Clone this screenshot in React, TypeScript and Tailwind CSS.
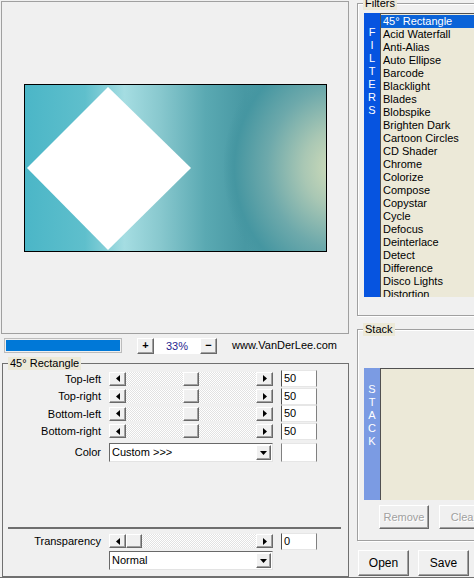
import React from "react";

const filters = [
  "45° Rectangle",
  "Acid Waterfall",
  "Anti-Alias",
  "Auto Ellipse",
  "Barcode",
  "Blacklight",
  "Blades",
  "Blobspike",
  "Brighten Dark",
  "Cartoon Circles",
  "CD Shader",
  "Chrome",
  "Colorize",
  "Compose",
  "Copystar",
  "Cycle",
  "Defocus",
  "Deinterlace",
  "Detect",
  "Difference",
  "Disco Lights",
  "Distortion",
];

const sliders = [
  { label: "Top-left", value: 50 },
  { label: "Top-right", value: 50 },
  { label: "Bottom-left", value: 50 },
  { label: "Bottom-right", value: 50 },
];

const raised =
  "flex items-center justify-center bg-[#f0f0f0] border border-t-white border-l-white border-r-[#696969] border-b-[#696969] shadow-[inset_-1px_-1px_0_#a0a0a0]";

const ArrowBtn = ({ dir }: { dir: "left" | "right" }) => (
  <div className={`${raised} w-[17px] h-[14px] shrink-0`}>
    <svg width="4" height="7" viewBox="0 0 4 7">
      {dir === "left" ? (
        <polygon points="4,0 4,7 0,3.5" fill="#000" />
      ) : (
        <polygon points="0,0 0,7 4,3.5" fill="#000" />
      )}
    </svg>
  </div>
);

const Slider = ({ atStart }: { atStart?: boolean }) => (
  <div className="flex w-[164px] h-[14px] bg-[repeating-conic-gradient(#ffffff_0_25%,#e2e2e2_0_50%)] bg-[length:2px_2px]">
    <ArrowBtn dir="left" />
    <div className={`flex-1 flex ${atStart ? "justify-start" : "justify-center"}`}>
      <div className={`${raised} w-[16px] h-[14px]`} />
    </div>
    <ArrowBtn dir="right" />
  </div>
);

const TextBox = ({ value }: { value: string }) => (
  <div className="w-[36px] h-[17px] bg-white border border-[#e6e6e6] border-l-[#505050] border-r-[#808080] pl-[2px] leading-[15px]">
    {value}
  </div>
);

const Select = ({ value }: { value: string }) => (
  <div className="flex items-center w-[164px] h-[19px] bg-white border border-t-[#696969] border-l-[#696969] border-r-[#e3e3e3] border-b-[#e3e3e3] pl-[2px]">
    <span className="flex-1 leading-[17px]">{value}</span>
    <div className={`${raised} w-[15px] h-[15px] mr-px`}>
      <svg width="7" height="4" viewBox="0 0 7 4">
        <polygon points="0,0 7,0 3.5,4" fill="#000" />
      </svg>
    </div>
  </div>
);

const Strip = ({ text, color, padTop }: { text: string; color: string; padTop: string }) => (
  <div className={`w-[16px] shrink-0 flex flex-col items-center ${color} ${padTop} text-white`}>
    {text.split("").map((c, i) => (
      <span key={i} className="h-[13px] leading-[13px]">
        {c}
      </span>
    ))}
  </div>
);

export default function App() {
  return (
    <div className="w-[474px] h-[578px] bg-[#f0f0f0] flex overflow-hidden border-b border-[#707070] font-['Liberation_Sans',Arial,sans-serif] text-[11px] text-black">
      {/* left column */}
      <div className="w-[350px] shrink-0 flex flex-col">
        {/* preview */}
        <div className="mt-px ml-px w-[348px] h-[333px] border border-[#a0a0a0] flex items-center justify-center">
          <div className="w-[303px] h-[168px] border border-black bg-[image:radial-gradient(ellipse_115px_130px_at_104%_50%,#d3deba_0%,#a9c7b4_30%,#6da9ab_62%,#4596a1_90%,rgba(69,150,161,0)_100%),linear-gradient(90deg,#4bb6c7_0%,#5fbfcc_20%,#a5dde2_33%,#88c8ce_45%,#5aa9b2_60%,#4898a3_73%,#4f9ea6_100%)]">
            <svg width="301" height="166" className="block">
              <polygon points="83,2 166,83 83,165 2,83" fill="#fff" />
            </svg>
          </div>
        </div>

        {/* zoom row */}
        <div className="h-[23px] flex items-center">
          <div className="ml-[4px] w-[118px] h-[15px] border border-[#bcbcbc] p-px">
            <div className="w-full h-full bg-[#0078d7]" />
          </div>
          <div className={`${raised} ml-[15px] w-[17px] h-[16px] font-bold leading-none`}>+</div>
          <div className="w-[46px] h-[16px] bg-white text-center leading-[16px] text-[#1f1f8f]">33%</div>
          <div className={`${raised} w-[17px] h-[16px] font-bold leading-none`}>−</div>
          <span className="ml-[15px]">www.VanDerLee.com</span>
        </div>

        {/* filter settings */}
        <fieldset className="ml-[2px] w-[347px] flex-1 border border-[#707070] flex flex-col min-h-0">
          <legend className="ml-[5px] px-[2px] bg-[#ece9d8] leading-[13px]">45° Rectangle</legend>
          {sliders.map((s) => (
            <div key={s.label} className="flex items-center h-[17.5px]">
              <span className="w-[98px] text-right">{s.label}</span>
              <div className="ml-[8px]">
                <Slider />
              </div>
              <div className="ml-[8px]">
                <TextBox value={String(s.value)} />
              </div>
            </div>
          ))}
          <div className="flex items-center h-[19px] mt-[3px]">
            <span className="w-[98px] text-right">Color</span>
            <div className="ml-[8px]">
              <Select value="Custom >>>" />
            </div>
            <div className="ml-[8px] w-[36px] h-[19px] bg-white border border-[#e6e6e6] border-l-[#808080] border-r-[#808080]" />
          </div>

          <div className="mt-[65px] ml-[5px] mr-[7px] h-[2px] bg-[#6e6e6e]" />

          <div className="flex items-center h-[18px] mt-[3px]">
            <span className="w-[98px] text-right">Transparency</span>
            <div className="ml-[8px]">
              <Slider atStart />
            </div>
            <div className="ml-[8px]">
              <TextBox value="0" />
            </div>
          </div>
          <div className="ml-[106px] mt-px">
            <Select value="Normal" />
          </div>
        </fieldset>
      </div>

      {/* right column */}
      <div className="flex-1 flex flex-col pl-[7px]">
        <fieldset className="-mt-[3px] w-[130px] border border-[#a0a0a0] shadow-[inset_1px_1px_0_#fff,1px_1px_0_#fff] pb-[18px]">
          <legend className="ml-[5px] px-[2px] bg-[#ece9d8] leading-[13px]">Filters</legend>
          <div className="mt-[3px] ml-[6px] h-[284px] flex">
            <Strip text="FILTERS" color="bg-[#0654e0]" padTop="pt-[13px]" />
            <div className="flex-1 bg-[#ece9d8] border-l border-t border-[#505050] pt-px overflow-hidden">
              {filters.map((f, i) => (
                <div
                  key={f}
                  className={`h-[13px] leading-[13px] pl-[2px] whitespace-nowrap ${
                    i === 0 ? "bg-[#0a63d8] text-white" : ""
                  }`}
                >
                  {f}
                </div>
              ))}
            </div>
          </div>
        </fieldset>

        <fieldset className="mt-[7px] w-[130px] border border-[#a0a0a0] shadow-[inset_1px_1px_0_#fff,1px_1px_0_#fff] pb-[11px]">
          <legend className="ml-[5px] px-[2px] bg-[#ece9d8] leading-[13px]">Stack</legend>
          <div className="mt-[32px] ml-[6px] h-[132px] flex">
            <Strip text="STACK" color="bg-[#7b9be3]" padTop="pt-[15px]" />
            <div className="flex-1 bg-[#ece9d8] border-l border-t border-[#505050]" />
          </div>
          <div className="mt-[5px] ml-[21px] flex">
            <div className={`${raised} w-[50px] h-[24px] text-[#a0a0a0] [text-shadow:1px_1px_0_#fff]`}>Remove</div>
            <div className={`${raised} ml-[10px] w-[50px] h-[24px] text-[#a0a0a0] [text-shadow:1px_1px_0_#fff]`}>Clear</div>
          </div>
        </fieldset>

        <div className="mt-[9px] flex">
          <div className={`${raised} ml-px w-[51px] h-[26px] border-r-[#404040] border-b-[#404040] text-[12px]`}>Open</div>
          <div className={`${raised} ml-[9px] w-[51px] h-[26px] border-r-[#404040] border-b-[#404040] text-[12px]`}>Save</div>
        </div>
      </div>
    </div>
  );
}
